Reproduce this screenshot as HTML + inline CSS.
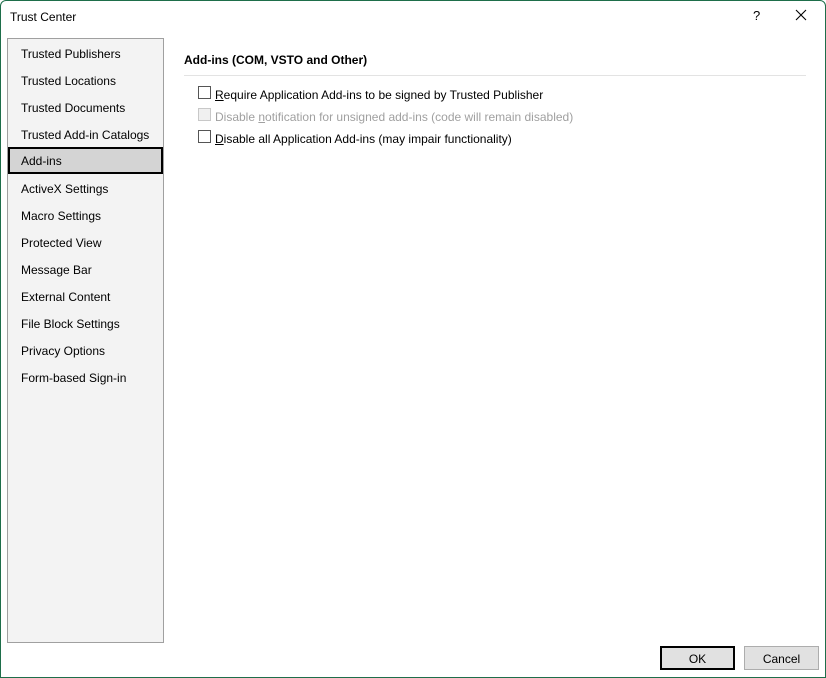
<!DOCTYPE html>
<html><head><meta charset="utf-8"><style>
*{margin:0;padding:0;box-sizing:border-box}
body{width:826px;height:678px;overflow:hidden;background:#fff;font-family:"Liberation Sans",sans-serif;font-size:12px;color:#000;position:relative}
.frame{position:absolute;left:0;top:0;width:826px;height:678px;border:1px solid #1e6e4a;border-radius:6px 6px 0 0;pointer-events:none}
.title{position:absolute;left:10px;top:10px;font-size:12px}
.q{position:absolute;left:753px;top:8px;font-size:13px}
.x{position:absolute;left:795px;top:9px}
.nav{position:absolute;left:7px;top:38px;width:157px;height:605px;background:#f3f3f3;border:1px solid #a0a0a0}
.nav div{position:absolute;left:13px;height:22px;line-height:22px;white-space:nowrap}
.nav .sel{left:0;width:155px;height:27px;border:2px solid #000;background:#d4d4d4;padding-left:11px;line-height:25px}
.h{position:absolute;left:184px;top:53px;font-weight:bold;font-size:12px}
.hr{position:absolute;left:184px;top:75px;width:622px;height:1px;background:#e3e3e3}
.cb{position:absolute;left:198px;width:13px;height:13px;border:1px solid #555;background:#fff}
.lb{position:absolute;left:215px;white-space:nowrap}
.dis{color:#a0a0a0}
.btn{position:absolute;top:646px;height:24px;width:75px;text-align:center;line-height:24px;background:#e1e1e1;border:1px solid #adadad}
</style></head><body>
<div class="title">Trust Center</div>
<div class="q">?</div>
<svg class="x" width="12" height="12" viewBox="0 0 12 12"><path d="M1 1L11 11M11 1L1 11" stroke="#000" stroke-width="1.1"/></svg>
<div class="nav">
<div style="top:4px">Trusted Publishers</div>
<div style="top:31px">Trusted Locations</div>
<div style="top:58px">Trusted Documents</div>
<div style="top:85px">Trusted Add-in Catalogs</div>
<div class="sel" style="top:108px">Add-ins</div>
<div style="top:139px">ActiveX Settings</div>
<div style="top:166px">Macro Settings</div>
<div style="top:193px">Protected View</div>
<div style="top:220px">Message Bar</div>
<div style="top:247px">External Content</div>
<div style="top:274px">File Block Settings</div>
<div style="top:301px">Privacy Options</div>
<div style="top:328px">Form-based Sign-in</div>
</div>
<div class="h">Add-ins (COM, VSTO and Other)</div>
<div class="hr"></div>
<div class="cb" style="top:86px"></div>
<div class="lb" style="top:88px"><u>R</u>equire Application Add-ins to be signed by Trusted Publisher</div>
<div class="cb" style="top:108px;border-color:#c8c8c8;background:#f0f0f0"></div>
<div class="lb dis" style="top:110px">Disable <u>n</u>otification for unsigned add-ins (code will remain disabled)</div>
<div class="cb" style="top:130px"></div>
<div class="lb" style="top:132px"><u>D</u>isable all Application Add-ins (may impair functionality)</div>
<div class="btn" style="left:660px;border:2px solid #000;line-height:22px">OK</div>
<div class="btn" style="left:744px">Cancel</div>
<div class="frame"></div>
</body></html>
